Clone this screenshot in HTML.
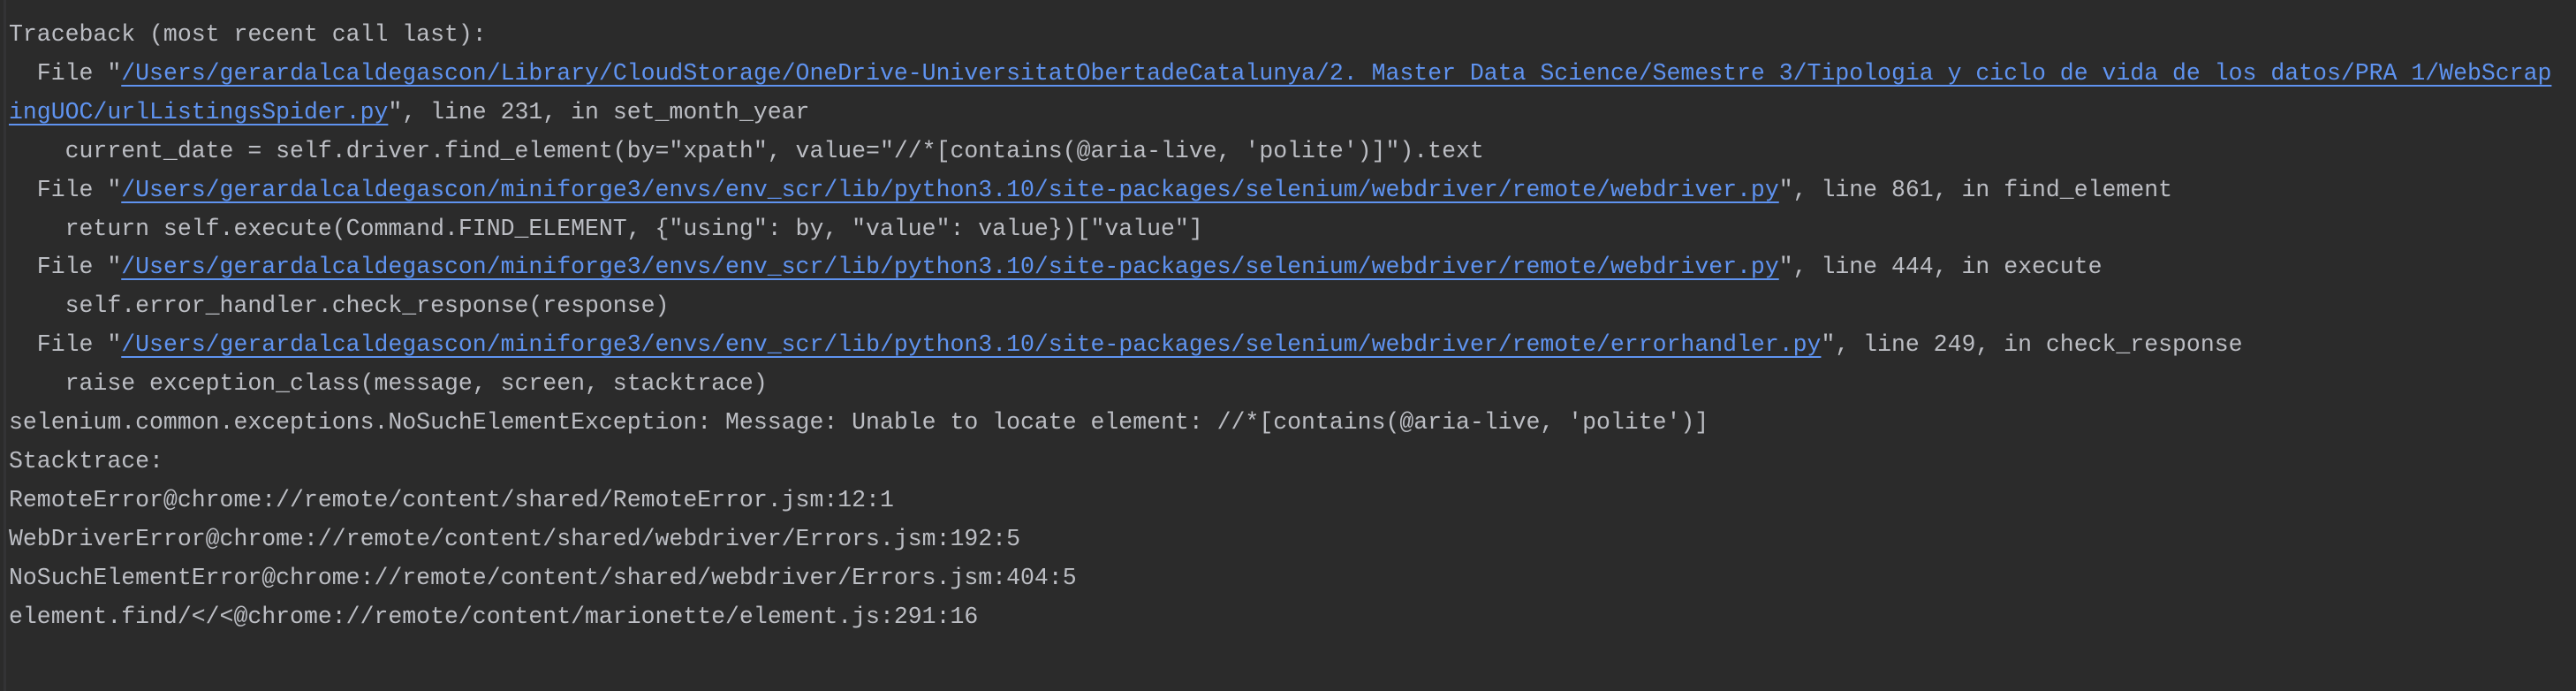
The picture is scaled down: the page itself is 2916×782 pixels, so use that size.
<!DOCTYPE html>
<html><head><meta charset="utf-8"><style>
html,body{margin:0;padding:0;background:#2b2b2b;}
body{width:2916px;height:782px;overflow:hidden;position:relative;}
.l{position:absolute;left:4px;top:0;width:3px;height:782px;background:#333335;}
pre{margin:0;position:absolute;left:10px;top:18px;font-family:"Liberation Mono",monospace;font-size:26.5px;line-height:43.9px;color:#bcbec4;white-space:pre;}
a{color:#5f93f0;text-decoration:underline;text-decoration-thickness:2px;text-underline-offset:6px;}
</style></head><body><div class="l"></div><pre>Traceback (most recent call last):
  File "<a>/Users/gerardalcaldegascon/Library/CloudStorage/OneDrive-UniversitatObertadeCatalunya/2. Master Data Science/Semestre 3/Tipologia y ciclo de vida de los datos/PRA 1/WebScrap</a>
<a>ingUOC/urlListingsSpider.py</a>", line 231, in set_month_year
    current_date = self.driver.find_element(by="xpath", value="//*[contains(@aria-live, 'polite')]").text
  File "<a>/Users/gerardalcaldegascon/miniforge3/envs/env_scr/lib/python3.10/site-packages/selenium/webdriver/remote/webdriver.py</a>", line 861, in find_element
    return self.execute(Command.FIND_ELEMENT, {"using": by, "value": value})["value"]
  File "<a>/Users/gerardalcaldegascon/miniforge3/envs/env_scr/lib/python3.10/site-packages/selenium/webdriver/remote/webdriver.py</a>", line 444, in execute
    self.error_handler.check_response(response)
  File "<a>/Users/gerardalcaldegascon/miniforge3/envs/env_scr/lib/python3.10/site-packages/selenium/webdriver/remote/errorhandler.py</a>", line 249, in check_response
    raise exception_class(message, screen, stacktrace)
selenium.common.exceptions.NoSuchElementException: Message: Unable to locate element: //*[contains(@aria-live, 'polite')]
Stacktrace:
RemoteError@chrome://remote/content/shared/RemoteError.jsm:12:1
WebDriverError@chrome://remote/content/shared/webdriver/Errors.jsm:192:5
NoSuchElementError@chrome://remote/content/shared/webdriver/Errors.jsm:404:5
element.find/&lt;/&lt;@chrome://remote/content/marionette/element.js:291:16</pre></body></html>
